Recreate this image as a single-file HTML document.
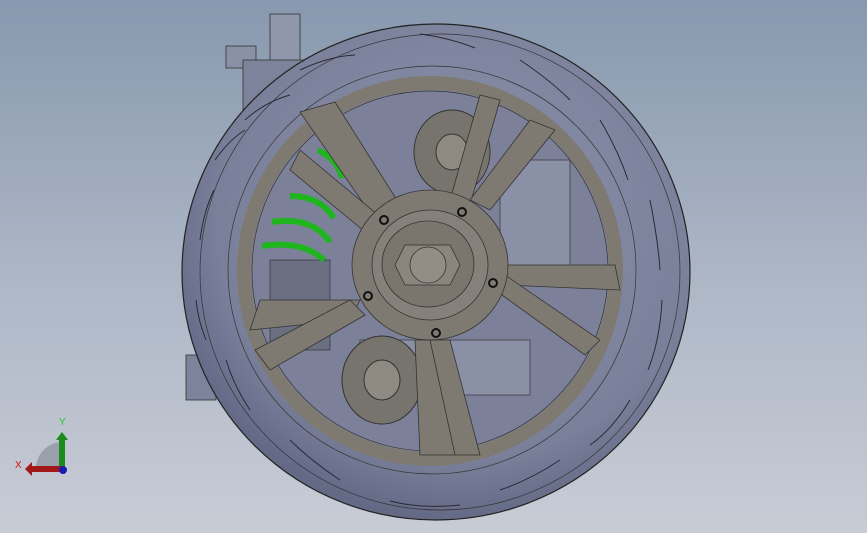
<!DOCTYPE html>
<html><head><style>
html,body{margin:0;padding:0;width:867px;height:533px;overflow:hidden;background:linear-gradient(#8898ae,#aeb8c7 55%,#c8ccd5);}
svg{display:block}
</style></head><body>
<svg width="867" height="533" viewBox="0 0 867 533" xmlns="http://www.w3.org/2000/svg">
<defs>
<radialGradient id="tire" cx="0.55" cy="0.4" r="0.6">
<stop offset="0" stop-color="#8e93ab"/><stop offset="0.8" stop-color="#7a809a"/><stop offset="1" stop-color="#646a86"/>
</radialGradient>
</defs>
<g stroke="#333" stroke-width="0.8">
<rect x="270" y="14" width="30" height="60" fill="#9096ac"/>
<rect x="226" y="46" width="30" height="22" fill="#8a90a6"/>
<rect x="243" y="60" width="60" height="50" fill="#7d839b"/>
<rect x="186" y="355" width="30" height="45" fill="#7d839b"/>
</g>
<ellipse cx="436" cy="272" rx="254" ry="248" fill="url(#tire)" stroke="#222" stroke-width="1.2"/>
<ellipse cx="440" cy="272" rx="240" ry="238" fill="none" stroke="#333" stroke-width="0.7"/>
<ellipse cx="432" cy="270" rx="204" ry="204" fill="none" stroke="#333" stroke-width="0.7"/>
<g stroke="#2a2a35" stroke-width="1" fill="none">
<path d="M200 240 q4 -30 14 -50"/><path d="M196 300 q2 20 10 40"/><path d="M215 160 q14 -20 30 -30"/>
<path d="M245 120 q20 -18 45 -25"/><path d="M300 70 q30 -14 55 -15"/><path d="M420 34 q30 4 55 14"/>
<path d="M520 60 q30 20 50 40"/><path d="M600 120 q18 30 28 60"/><path d="M650 200 q8 40 10 70"/>
<path d="M662 300 q-2 40 -14 70"/><path d="M630 400 q-18 30 -40 45"/><path d="M560 460 q-30 20 -60 30"/>
<path d="M460 505 q-40 4 -70 -4"/><path d="M340 480 q-30 -20 -50 -40"/><path d="M250 410 q-16 -24 -24 -50"/>
</g>
<ellipse cx="430" cy="271" rx="192" ry="194" fill="#7c8199" stroke="#222" stroke-width="1"/>
<ellipse cx="430" cy="271" rx="186" ry="188" fill="none" stroke="#7e7a72" stroke-width="14"/>
<ellipse cx="430" cy="271" rx="178" ry="180" fill="none" stroke="#333" stroke-width="0.7"/>
<rect x="360" y="340" width="170" height="55" fill="#8a90a6" stroke="#333" stroke-width="0.7"/>
<rect x="500" y="160" width="70" height="110" fill="#8a90a6" stroke="#333" stroke-width="0.7"/>
<rect x="270" y="260" width="60" height="90" fill="#6b6f82" stroke="#333" stroke-width="0.7"/>
<ellipse cx="382" cy="380" rx="40" ry="44" fill="#77746d" stroke="#333"/>
<ellipse cx="382" cy="380" rx="18" ry="20" fill="#8e8a82" stroke="#333"/>
<ellipse cx="452" cy="152" rx="38" ry="42" fill="#77746d" stroke="#333"/>
<ellipse cx="452" cy="152" rx="16" ry="18" fill="#8e8a82" stroke="#333"/>
<g stroke="#1fb51f" stroke-width="6" fill="none">
<path d="M318 150 q20 10 24 28"/><path d="M290 196 q30 0 44 22"/><path d="M272 222 q40 -6 58 20"/><path d="M262 246 q40 -6 62 14"/>
</g>
<g fill="#7e7a72" stroke="#333" stroke-width="0.8">
<polygon points="300,112 335,102 400,205 375,220"/>
<polygon points="290,170 300,150 390,225 375,240"/>
<polygon points="480,95 500,100 470,205 450,200"/>
<polygon points="530,120 555,130 490,210 470,200"/>
<polygon points="615,265 620,290 505,285 505,265"/>
<polygon points="600,340 585,355 495,290 505,275"/>
<polygon points="415,340 440,340 455,455 420,455"/>
<polygon points="430,340 450,340 480,455 455,455"/>
<polygon points="250,330 260,300 360,300 350,320"/>
<polygon points="270,370 255,350 350,300 365,315"/>
</g>
<ellipse cx="430" cy="265" rx="78" ry="75" fill="#7e7a72" stroke="#333" stroke-width="0.8"/>
<ellipse cx="430" cy="265" rx="58" ry="55" fill="#85817a" stroke="#333" stroke-width="0.8"/>
<ellipse cx="428" cy="264" rx="46" ry="43" fill="#7a766e" stroke="#333" stroke-width="0.8"/>
<polygon points="405,245 450,245 460,265 450,285 405,285 395,265" fill="#8a867e" stroke="#333" stroke-width="0.8"/>
<ellipse cx="428" cy="265" rx="18" ry="18" fill="#928e86" stroke="#333" stroke-width="0.8"/>
<g fill="none" stroke="#111" stroke-width="2">
<circle cx="384" cy="220" r="4"/><circle cx="462" cy="212" r="4"/><circle cx="493" cy="283" r="4"/><circle cx="368" cy="296" r="4"/><circle cx="436" cy="333" r="4"/>
</g>
<path d="M36 470 A27 27 0 0 1 60 442 L60 470 Z" fill="#9aa0ab"/>
<rect x="59" y="440" width="6" height="30" fill="#1a8a1a"/>
<polygon points="56,440 62,432 68,440" fill="#1a8a1a"/>
<rect x="32" y="466" width="30" height="6" fill="#a01818"/>
<polygon points="32,462 25,469 32,476" fill="#a01818"/>
<circle cx="63" cy="470" r="4" fill="#1a1ab0"/>
<text x="59" y="425" font-family="Liberation Sans,sans-serif" font-size="10" fill="#22cc22">Y</text>
<text x="15" y="468" font-family="Liberation Sans,sans-serif" font-size="10" fill="#dd1111">X</text>
</svg>
</body></html>
